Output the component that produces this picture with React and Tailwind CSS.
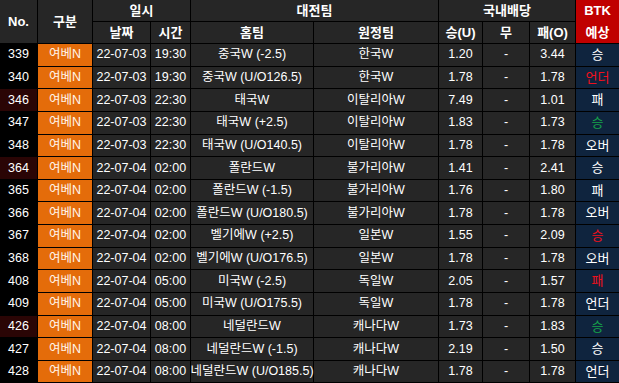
import React from 'react';

const rows = [
  { no: '339', date: '22-07-03', time: '19:30', home: '중국W (-2.5)', away: '한국W', w: '1.20', l: '3.44', pick: '승', tone: 'white' },
  { no: '340', date: '22-07-03', time: '19:30', home: '중국W (U/O126.5)', away: '한국W', w: '1.78', l: '1.78', pick: '언더', tone: 'red' },
  { no: '346', date: '22-07-03', time: '22:30', home: '태국W', away: '이탈리아W', w: '7.49', l: '1.01', pick: '패', tone: 'white', hot: true },
  { no: '347', date: '22-07-03', time: '22:30', home: '태국W (+2.5)', away: '이탈리아W', w: '1.83', l: '1.73', pick: '승', tone: 'green' },
  { no: '348', date: '22-07-03', time: '22:30', home: '태국W (U/O140.5)', away: '이탈리아W', w: '1.78', l: '1.78', pick: '오버', tone: 'white' },
  { no: '364', date: '22-07-04', time: '02:00', home: '폴란드W', away: '불가리아W', w: '1.41', l: '2.41', pick: '승', tone: 'white', hot: true },
  { no: '365', date: '22-07-04', time: '02:00', home: '폴란드W (-1.5)', away: '불가리아W', w: '1.76', l: '1.80', pick: '패', tone: 'white' },
  { no: '366', date: '22-07-04', time: '02:00', home: '폴란드W (U/O180.5)', away: '불가리아W', w: '1.78', l: '1.78', pick: '오버', tone: 'white' },
  { no: '367', date: '22-07-04', time: '02:00', home: '벨기에W (+2.5)', away: '일본W', w: '1.55', l: '2.09', pick: '승', tone: 'red' },
  { no: '368', date: '22-07-04', time: '02:00', home: '벨기에W (U/O176.5)', away: '일본W', w: '1.78', l: '1.78', pick: '오버', tone: 'white' },
  { no: '408', date: '22-07-04', time: '05:00', home: '미국W (-2.5)', away: '독일W', w: '2.05', l: '1.57', pick: '패', tone: 'red' },
  { no: '409', date: '22-07-04', time: '05:00', home: '미국W (U/O175.5)', away: '독일W', w: '1.78', l: '1.78', pick: '언더', tone: 'white' },
  { no: '426', date: '22-07-04', time: '08:00', home: '네덜란드W', away: '캐나다W', w: '1.73', l: '1.83', pick: '승', tone: 'green', hot: true },
  { no: '427', date: '22-07-04', time: '08:00', home: '네덜란드W (-1.5)', away: '캐나다W', w: '2.19', l: '1.50', pick: '승', tone: 'white' },
  { no: '428', date: '22-07-04', time: '08:00', home: '네덜란드W (U/O185.5)', away: '캐나다W', w: '1.78', l: '1.78', pick: '언더', tone: 'white' },
];

const toneClass = {
  white: 'text-white',
  red: 'text-[#f0101c]',
  green: 'text-[#16a34a]',
};

const cell = 'flex items-center justify-center bg-[#262626] text-white';
const head = 'flex items-center justify-center bg-[#262626] text-white font-bold text-[13px]';

const App = () => {
  return (
    <div
      className="min-h-screen bg-black overflow-hidden"
      style={{ fontFamily: '"Liberation Sans", "Noto Sans CJK KR", sans-serif' }}
    >
      <div className="grid grid-cols-[37px_54px_57px_39px_122px_124px_43px_46px_45px_43px] grid-rows-[21px_21px] auto-rows-[21.64px] gap-px bg-black text-[12.5px] w-[619px]">
        <div className={`${head} row-span-2`}>No.</div>
        <div className={`${head} row-span-2`}>구분</div>
        <div className={`${head} col-span-2`}>일시</div>
        <div className={`${head} col-span-2`}>대전팀</div>
        <div className={`${head} col-span-3`}>국내배당</div>
        <div className="row-span-2 flex flex-col items-center justify-center gap-[9px] bg-[#c00000] text-white font-bold text-[13px] leading-none">
          <span>BTK</span>
          <span>예상</span>
        </div>
        <div className={head}>날짜</div>
        <div className={head}>시간</div>
        <div className={head}>홈팀</div>
        <div className={head}>원정팀</div>
        <div className={head}>승(U)</div>
        <div className={head}>무</div>
        <div className={head}>패(O)</div>

        {rows.map((r) => (
          <React.Fragment key={r.no}>
            <div className={`flex items-center justify-center text-white ${r.hot ? 'bg-[#2a0505]' : 'bg-black'}`}>
              {r.no}
            </div>
            <div className="flex items-center justify-center bg-[#e46c0a] text-[#fff4ea]">여베N</div>
            <div className={cell}>{r.date}</div>
            <div className={cell}>{r.time}</div>
            <div className={`${cell} whitespace-nowrap`}>{r.home}</div>
            <div className={cell}>{r.away}</div>
            <div className={cell}>{r.w}</div>
            <div className={cell}>-</div>
            <div className={cell}>{r.l}</div>
            <div className={`flex items-center justify-center bg-[#0f243e] text-[13px] ${toneClass[r.tone]}`}>
              {r.pick}
            </div>
          </React.Fragment>
        ))}
      </div>
    </div>
  );
};

export default App;
